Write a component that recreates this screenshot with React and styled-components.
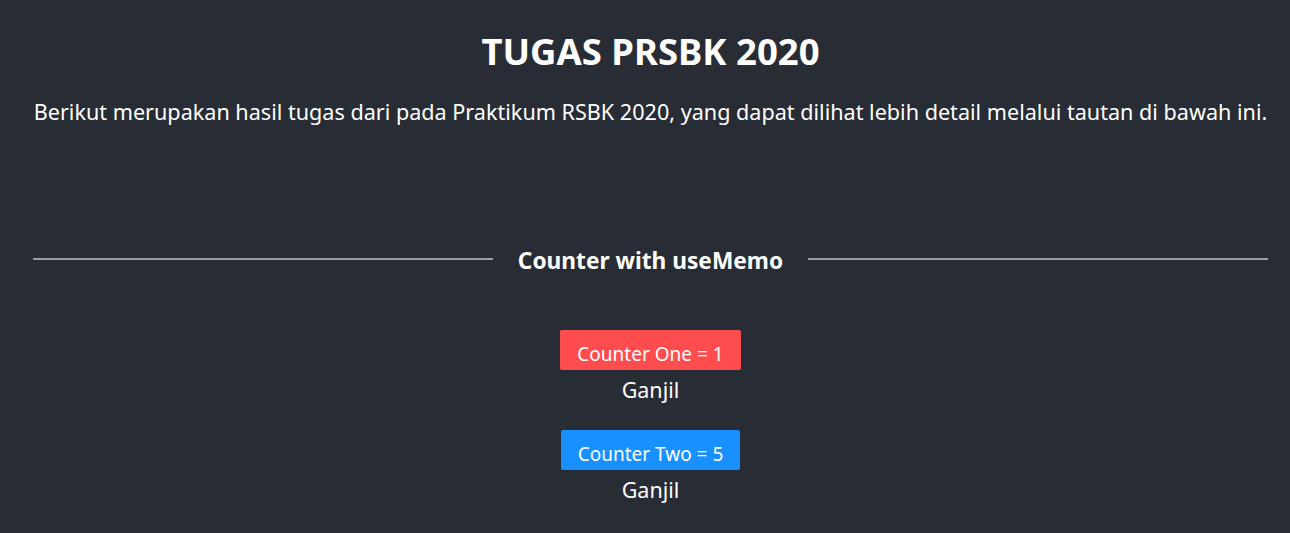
import React from "react";
import styled, { createGlobalStyle } from "styled-components";

const Global = createGlobalStyle`
  html, body { margin: 0; padding: 0; background: #282c34; }
  body { font-family: "Noto Sans", "Open Sans", sans-serif; color: #fff; }
`;

const Page = styled.div`
  min-height: 533px;
  background: #282c34;
  padding: 0 22px 0 33px;
  box-sizing: border-box;
  text-align: center;
`;

const Title = styled.h1`
  margin: 0;
  padding-top: 27px;
  font-size: 36.5px;
  font-weight: 700;
  line-height: 48px;
`;

const Lead = styled.p`
  margin: 22px 0 0;
  font-size: 21.6px;
  line-height: 30px;
  white-space: nowrap;
`;

const Divider = styled.div`
  display: flex;
  align-items: center;
  gap: 25px;
  margin-top: 115px;
  &::before, &::after {
    content: "";
    flex: 1;
    height: 2px;
    background: #9a9ea5;
  }
`;

const DividerText = styled.span`
  display: block;
  padding-top: 4px;
  font-size: 22.7px;
  font-weight: 700;
  line-height: 30px;
`;

const Counters = styled.div`
  display: flex;
  flex-direction: column;
  align-items: center;
  margin-top: 54px;
  gap: 20px;
`;

const Item = styled.div`
  display: flex;
  flex-direction: column;
  align-items: center;
`;

const Button = styled.button`
  height: 40px;
  padding: 7px 17px 0;
  border: none;
  border-radius: 2px;
  background: ${(p) => p.$bg};
  color: #fff;
  font-family: inherit;
  font-size: 19px;
  line-height: 26px;
  cursor: pointer;
`;

const Parity = styled.div`
  font-size: 21.5px;
  line-height: 40px;
  height: 40px;
`;

export default function App() {
  return (
    <>
      <Global />
      <Page>
        <Title>TUGAS PRSBK 2020</Title>
        <Lead>
          Berikut merupakan hasil tugas dari pada Praktikum RSBK 2020, yang dapat dilihat lebih detail melalui tautan di bawah ini.
        </Lead>
        <Divider>
          <DividerText>Counter with useMemo</DividerText>
        </Divider>
        <Counters>
          <Item>
            <Button $bg="#ff4d4f">Counter One = 1</Button>
            <Parity>Ganjil</Parity>
          </Item>
          <Item>
            <Button $bg="#1890ff">Counter Two = 5</Button>
            <Parity>Ganjil</Parity>
          </Item>
        </Counters>
      </Page>
    </>
  );
}
